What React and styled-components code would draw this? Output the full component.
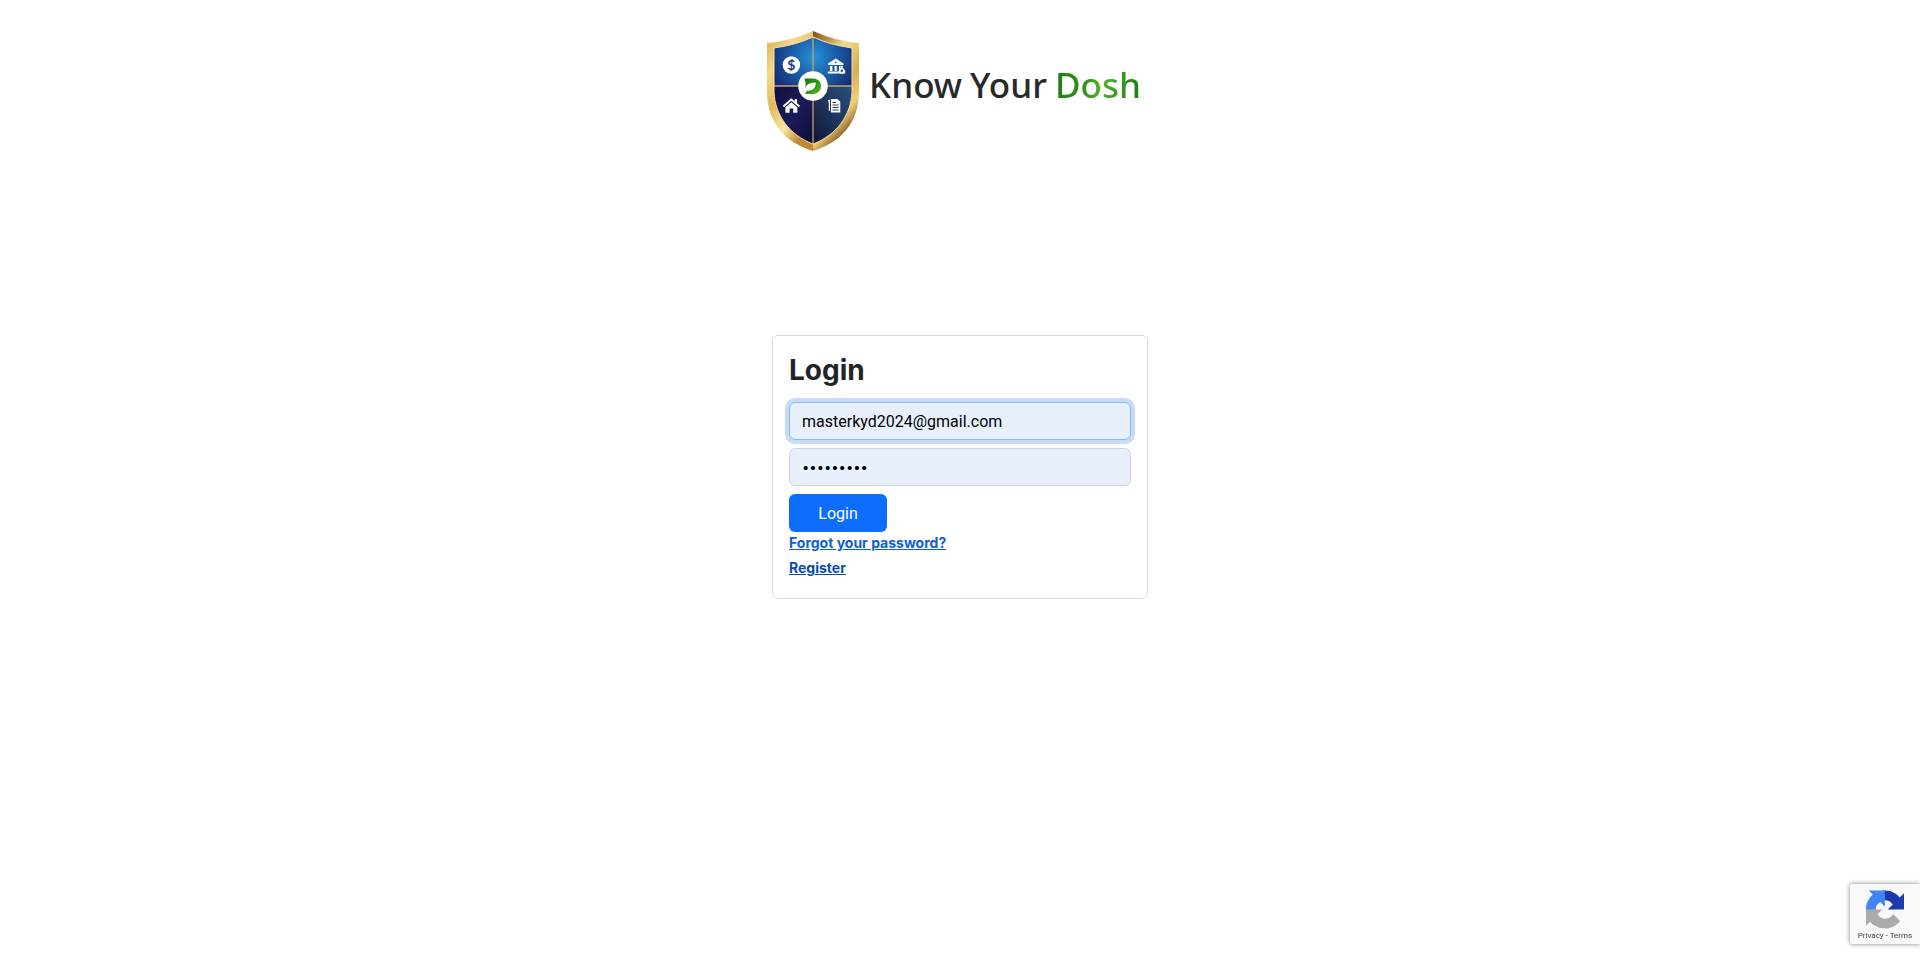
import React, { useState } from "react";
import styled, { createGlobalStyle, css } from "styled-components";

const GlobalStyle = createGlobalStyle`
  *, *::before, *::after {
    box-sizing: border-box;
  }

  body {
    margin: 0;
    background: #fff;
    color: #212529;
    font-family: Inter, "Liberation Sans", sans-serif;
    font-size: 16px;
    line-height: 24px;
  }
`;

const Page = styled.div`
  display: flex;
  flex-direction: column;
  align-items: center;
  gap: 184px;
  padding: 31px 16px;
`;

const Brand = styled.header`
  display: flex;
  align-items: center;
  gap: 10px;
  padding-right: 12px;
`;

const Shield = styled.svg`
  width: 92px;
  height: 120px;
`;

const BrandName = styled.span`
  display: flex;
  gap: 8px;
  padding-bottom: 12px;
  color: #292929;
  font-family: "Noto Sans", "Open Sans", sans-serif;
  font-size: 35px;
  font-weight: 500;
  line-height: 48px;
  white-space: nowrap;
`;

const Accent = styled.span`
  background: linear-gradient(100deg, #1f7f14 5%, #2c9417 35%, #55b22c 55%, #1f8313 90%);
  background-clip: text;
  color: transparent;
`;

const Card = styled.form`
  display: flex;
  flex-direction: column;
  align-items: flex-start;
  width: 100%;
  max-width: 376px;
  padding: 16px 16px 20px;
  border: 1px solid #d8dade;
  border-radius: 6px;
`;

const Title = styled.h2`
  margin: 0 0 14px;
  font-size: 28px;
  font-weight: 700;
  line-height: 36px;
`;

const Field = styled.input`
  width: 100%;
  height: 38px;
  margin-bottom: 8px;
  padding: 6px 12px;
  border: 1px solid #ced4da;
  border-radius: 6px;
  outline: 0;
  background: #e8f0fe;
  color: #000;
  font-family: Roboto, "Liberation Sans", sans-serif;
  font-size: 16px;

  &[type="password"] {
    font-family: Inter, "Liberation Sans", sans-serif;
    font-size: 13px;
  }

  ${(props) =>
    props.$active &&
    css`
      border-color: #86b7fe;
      box-shadow: 0 0 0 4px rgba(13, 90, 220, 0.22);
    `}
`;

const LoginButton = styled.button`
  width: 98px;
  height: 38px;
  border: 0;
  border-radius: 6px;
  background: #0d6efd;
  color: #fff;
  font-family: Roboto, "Liberation Sans", sans-serif;
  font-size: 16px;
  cursor: pointer;
`;

const Links = styled.nav`
  display: flex;
  flex-direction: column;
  align-items: flex-start;
  gap: 4px;
`;

const CardLink = styled.a`
  color: ${(props) => (props.$dark ? "#0a4bb0" : "#0d5fd9")};
  font-size: 14px;
  font-weight: 700;
  line-height: 21px;
`;

const Captcha = styled.aside`
  position: fixed;
  right: 0;
  bottom: 14px;
  display: flex;
  flex-direction: column;
  align-items: center;
  width: 70px;
  height: 60px;
  padding-top: 6px;
  border-radius: 2px 0 0 2px;
  background: #f9f9f9;
  box-shadow: 0 0 5px #808080;
`;

const CaptchaLinks = styled.div`
  color: #444;
  font-family: Roboto, "Liberation Sans", sans-serif;
  font-size: 8px;
  line-height: 14px;
  white-space: nowrap;

  a {
    color: inherit;
    text-decoration: none;
  }
`;

const Logo = () => (
  <Shield viewBox="0 0 92 120" aria-hidden="true">
    <defs>
      <linearGradient id="goldLeft" x1="0" y1="0" x2="0.5" y2="1">
        <stop offset="0" stopColor="#d8aa4c" />
        <stop offset="0.3" stopColor="#f5d987" />
        <stop offset="0.55" stopColor="#e2b95b" />
        <stop offset="0.8" stopColor="#fae9a4" />
        <stop offset="1" stopColor="#c08b32" />
      </linearGradient>
      <linearGradient id="goldRight" x1="0" y1="0" x2="0.4" y2="1">
        <stop offset="0" stopColor="#75501f" />
        <stop offset="0.16" stopColor="#b88a3e" />
        <stop offset="0.32" stopColor="#f3d98c" />
        <stop offset="0.6" stopColor="#d9ad55" />
        <stop offset="0.82" stopColor="#efcf79" />
        <stop offset="1" stopColor="#7a521c" />
      </linearGradient>
      <radialGradient id="sky" gradientUnits="userSpaceOnUse" cx="47" cy="26" r="45">
        <stop offset="0" stopColor="#2793d6" />
        <stop offset="0.45" stopColor="#1c62ad" />
        <stop offset="1" stopColor="#152c72" />
      </radialGradient>
      <linearGradient id="night" x1="0" y1="0" x2="1" y2="1">
        <stop offset="0" stopColor="#11103f" />
        <stop offset="0.5" stopColor="#1c1a59" />
        <stop offset="1" stopColor="#0c0d36" />
      </linearGradient>
      <linearGradient id="steel" x1="1" y1="0" x2="0" y2="1">
        <stop offset="0" stopColor="#29507f" />
        <stop offset="0.55" stopColor="#1d3158" />
        <stop offset="1" stopColor="#0c1430" />
      </linearGradient>
      <linearGradient id="leaf" x1="0" y1="0" x2="1" y2="1">
        <stop offset="0" stopColor="#17750f" />
        <stop offset="0.6" stopColor="#2f9d18" />
        <stop offset="1" stopColor="#63bd2d" />
      </linearGradient>
      <clipPath id="inner">
        <path d="M46 6Q63 14 85 17V61C84 84 70 104 46 113C22 104 8 84 7 61V17Q29 14 46 6Z" />
      </clipPath>
    </defs>
    <path d="M46 0Q24 10 0 12V63C1 91 17 111 46 120Z" fill="url(#goldLeft)" />
    <path d="M46 0Q68 10 92 12V63C91 91 75 111 46 120Z" fill="url(#goldRight)" />
    <g clipPath="url(#inner)">
      <path d="M7 5h78v50H7z" fill="url(#sky)" />
      <path d="M7 55h39v60H7z" fill="url(#night)" />
      <path d="M46 55h39v60H46z" fill="url(#steel)" />
      <path d="M46 5v109M7 55h78" stroke="#c9a267" strokeWidth="1.3" />
    </g>
    <path
      d="M46 6Q63 14 85 17V61C84 84 70 104 46 113C22 104 8 84 7 61V17Q29 14 46 6Z"
      fill="none"
      stroke="#f3dfaa"
      strokeWidth="1"
    />
    <circle cx="46" cy="55" r="14.8" fill="#fff" />
    <path
      d="M37.5 47.5H45.5C50.8 47.5 54 50.6 54 55.2C54 60 50.8 63 45.5 63H38.5V52Z"
      fill="url(#leaf)"
    />
    <path d="M37.5 62.5C36.8 55 41 51.5 48.8 51.5C49 57 45.5 60 40.5 59.6Z" fill="#fff" />
    <circle cx="24.4" cy="34" r="8.7" fill="#fff" />
    <text
      x="24.4"
      y="39"
      fill="#153f82"
      fontFamily="Lato, sans-serif"
      fontSize="14"
      fontWeight="700"
      textAnchor="middle"
    >
      $
    </text>
    <g fill="#fff">
      <path d="M61 32.5L68.8 27.5L76.5 32.5V34H61ZM63 35H65.4V40H63ZM67.6 35H69.8V40H67.6ZM72 35H73.6V37L72 39ZM61 40.6H71.5V42.5H60.5Z" />
      <circle cx="68.8" cy="31.3" r="0.9" fill="#1c62ad" />
      <path d="M73.6 34.8H76L75.6 36.8C77.5 38 78.5 39.8 78.3 41.3Q78 42.8 76.5 42.8H73Q71.3 42.8 71.2 41.3C71.2 39.8 72.2 38 74 36.8Z" />
      <circle cx="74.8" cy="39.8" r="1.3" fill="#1c62ad" />
      <path d="M15.8 74.8L24.3 67.3L27.8 70.3V68H30V72.2L33 74.8L31.8 76.2L24.3 69.8L17 76.2Z" />
      <path d="M18.4 76.2L24.3 71.2L30.3 76.2V81.8H26.2V77.5H22.6V81.8H18.4Z" />
      <path d="M64 68H70.5L73.3 70.8V81.5H64Z" />
      <path d="M60.8 69.2L63 68.5V80L61.8 79.8V71.5Z" />
    </g>
    <path d="M65.5 71.5H69M65.5 74H71.7M65.5 76.5H71.7M65.5 79H71.7" stroke="#253d70" />
  </Shield>
);

const CaptchaMark = () => (
  <svg width="38" height="39" viewBox="0 0 64 64" aria-hidden="true">
    <path fill="#1c3aa9" d="M64 31.955a33 33 0 0 0-.037-1.373V4.64l-7.171 7.172C50.923 4.628 41.996.038 32 .038c-10.403 0-19.645 4.969-25.47 12.665l11.754 11.878a15.6 15.6 0 0 1 4.761-5.343c2.053-1.602 4.961-2.912 8.964-2.912.484 0 .857.057 1.131.163 4.96.391 9.259 3.128 11.79 7.101l-8.32 8.32 27.39.045" />
    <path fill="#4285f4" d="M31.862.037a33 33 0 0 0-1.373.038H4.547l7.172 7.172C4.535 13.115-.055 22.042-.055 32.037c0 10.403 4.97 19.645 12.666 25.47l11.878-11.754a15.6 15.6 0 0 1-5.343-4.762c-1.602-2.053-2.912-4.96-2.912-8.963 0-.484.056-.858.163-1.132.391-4.96 3.128-9.259 7.1-11.79l8.32 8.32.045-27.39" />
    <path fill="#ababab" d="M-.055 32.037q.002.69.037 1.373v25.942l7.171-7.172C13.022 59.364 21.949 63.954 31.945 63.954c10.403 0 19.645-4.97 25.47-12.665L45.661 39.41a15.6 15.6 0 0 1-4.762 5.343c-2.053 1.602-4.96 2.912-8.963 2.912-.484 0-.858-.056-1.132-.163-4.96-.391-9.259-3.128-11.79-7.1l8.32-8.32-27.39-.045" />
  </svg>
);

const App = () => {
  const [email, setEmail] = useState("masterkyd2024@gmail.com");
  const [password, setPassword] = useState("password1");

  return (
    <>
      <GlobalStyle />
      <Page>
        <Brand>
          <Logo />
          <BrandName>
            <span>Know</span>
            <span>Your</span>
            <Accent>Dosh</Accent>
          </BrandName>
        </Brand>
        <Card onSubmit={(e) => e.preventDefault()}>
          <Title>Login</Title>
          <Field
            $active
            type="email"
            aria-label="Email"
            value={email}
            onChange={(e) => setEmail(e.target.value)}
          />
          <Field
            type="password"
            aria-label="Password"
            value={password}
            onChange={(e) => setPassword(e.target.value)}
          />
          <LoginButton type="submit">Login</LoginButton>
          <Links>
            <CardLink href="#forgot">Forgot your password?</CardLink>
            <CardLink href="#register" $dark>
              Register
            </CardLink>
          </Links>
        </Card>
      </Page>
      <Captcha>
        <CaptchaMark />
        <CaptchaLinks>
          <a href="#privacy">Privacy</a> - <a href="#terms">Terms</a>
        </CaptchaLinks>
      </Captcha>
    </>
  );
};

export default App;
